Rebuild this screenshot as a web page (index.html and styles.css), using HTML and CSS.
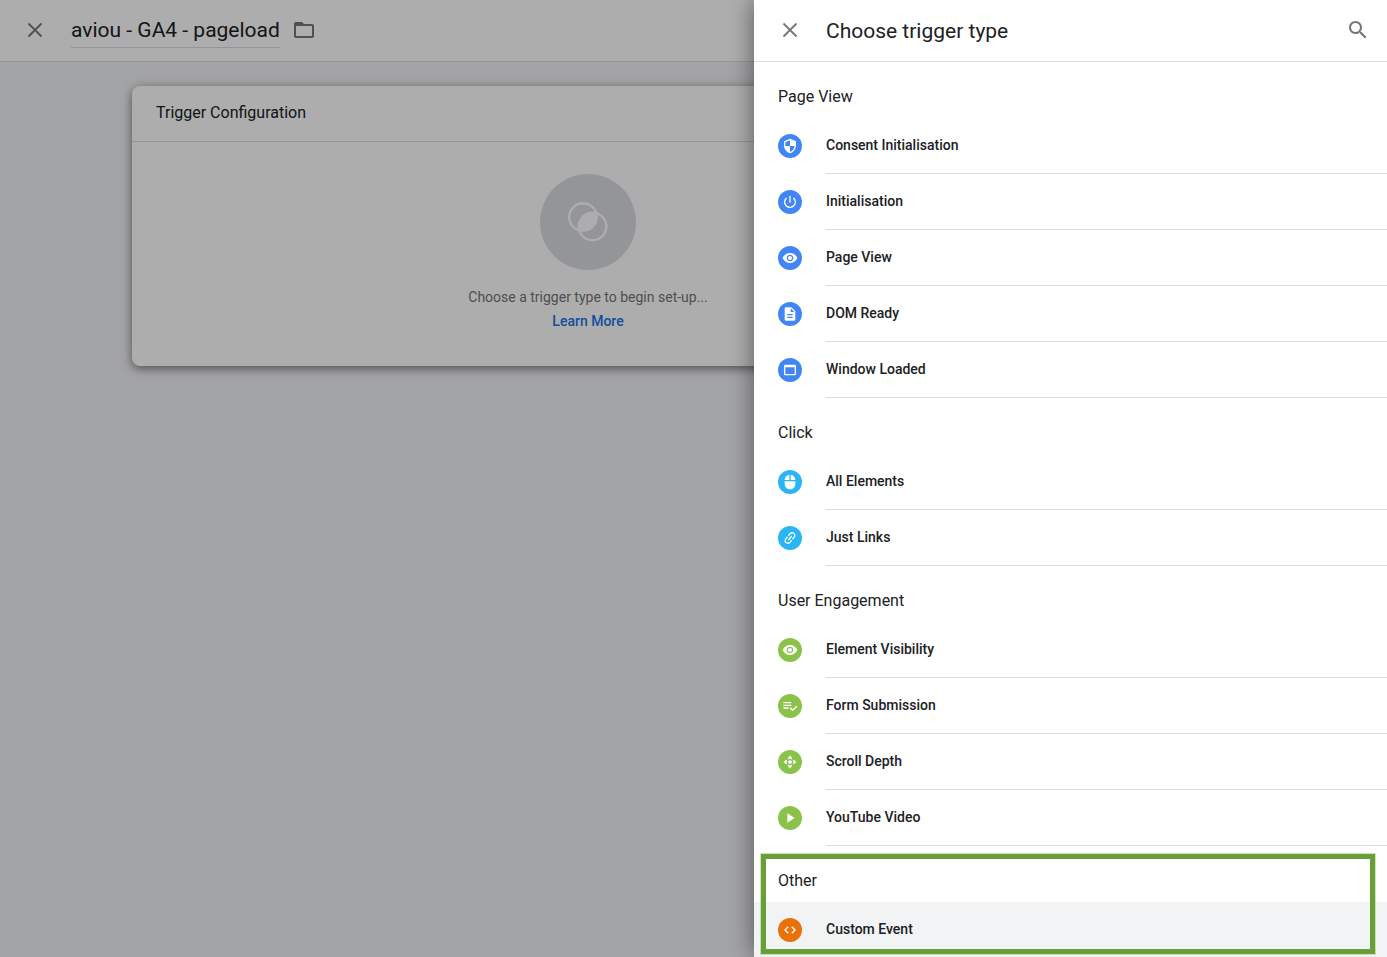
FILE: index.html
```html
<!DOCTYPE html>
<html lang="en">
<head>
  <meta charset="UTF-8">
  <meta name="viewport" content="width=device-width, initial-scale=1.0">
  <title>Choose trigger type</title>
  <link rel="stylesheet" href="styles.css">
</head>
<body>
  <div class="page">
    <header class="header">
      <button class="icon-btn" aria-label="Close trigger">
        <svg viewBox="0 0 24 24"><path d="M5.5 5.5l13 13M18.5 5.5l-13 13" fill="none" stroke="currentColor" stroke-width="1.8"/></svg>
      </button>
      <input class="name" type="text" aria-label="Trigger name" value="aviou - GA4 - pageload">
      <button class="icon-btn folder" aria-label="Move to folder">
        <svg viewBox="0 0 24 24"><path d="M9.17 6l2 2H20v10H4V6h5.17M10 4H4c-1.1 0-1.99.9-1.99 2L2 18c0 1.1.9 2 2 2h16c1.1 0 2-.9 2-2V8c0-1.1-.9-2-2-2h-8l-2-2z"/><path d="M3 5h7l2 3H3z"/></svg>
      </button>
    </header>
    <main class="content">
      <section class="card">
        <h2 class="card-title">Trigger Configuration</h2>
        <div class="card-body">
          <div class="placeholder">
            <svg viewBox="0 0 40 40">
              <circle cx="15" cy="15" r="13.8" fill="none" stroke="#fff" stroke-width="2.4"/>
              <circle cx="24.5" cy="24.5" r="13.8" fill="none" stroke="#fff" stroke-width="2.4"/>
              <path d="M28.2 11.1A13.8 13.8 0 0 1 11.1 28.2A13.8 13.8 0 0 1 28.2 11.1z" fill="#fff"/>
            </svg>
          </div>
          <p class="hint">Choose a trigger type to begin set-up...</p>
          <a class="learn" href="#">Learn More</a>
        </div>
      </section>
    </main>
  </div>

  <div class="overlay"></div>

  <!-- Slide-in panel -->
  <aside class="panel">
    <header class="header panel-header">
      <button class="icon-btn" aria-label="Close panel">
        <svg viewBox="0 0 24 24"><path d="M5.5 5.5l13 13M18.5 5.5l-13 13" fill="none" stroke="currentColor" stroke-width="1.8"/></svg>
      </button>
      <h1 class="panel-title">Choose trigger type</h1>
      <button class="icon-btn" aria-label="Search">
        <svg viewBox="0 0 24 24"><path d="M15.5 14h-.79l-.28-.27C15.41 12.59 16 11.11 16 9.5 16 5.91 13.09 3 9.5 3S3 5.91 3 9.5 5.91 16 9.5 16c1.61 0 3.09-.59 4.23-1.57l.27.28v.79l5 4.99L20.49 19l-4.99-5zm-6 0C7.01 14 5 11.99 5 9.5S7.01 5 9.5 5 14 7.01 14 9.5 11.99 14 9.5 14z"/></svg>
      </button>
    </header>

    <section class="group blue">
      <h2 class="group-title">Page View</h2>
      <button class="item">
        <span class="dot"><svg viewBox="0 0 24 24"><path d="M12 1L3 5v6c0 5.55 3.84 10.74 9 12 5.16-1.26 9-6.45 9-12V5l-9-4zm0 10.99h7c-.53 4.12-3.28 7.79-7 8.94V12H5V6.3l7-3.11v8.8z"/></svg></span>
        <span class="label">Consent Initialisation</span>
      </button>
      <button class="item">
        <span class="dot"><svg viewBox="0 0 24 24"><path d="M13 3h-2v10h2V3zm4.83 2.17l-1.42 1.42C17.99 7.86 19 9.81 19 12c0 3.87-3.13 7-7 7s-7-3.13-7-7c0-2.19 1.01-4.14 2.58-5.42L6.17 5.17C4.23 6.82 3 9.26 3 12c0 4.97 4.03 9 9 9s9-4.03 9-9c0-2.74-1.23-5.18-3.17-6.83z"/></svg></span>
        <span class="label">Initialisation</span>
      </button>
      <button class="item">
        <span class="dot"><svg viewBox="0 0 24 24"><path d="M12 4.5C7 4.5 2.73 7.61 1 12c1.73 4.39 6 7.5 11 7.5s9.27-3.11 11-7.5c-1.73-4.39-6-7.5-11-7.5zM12 17c-2.76 0-5-2.24-5-5s2.24-5 5-5 5 2.24 5 5-2.24 5-5 5zm0-8c-1.66 0-3 1.34-3 3s1.34 3 3 3 3-1.34 3-3-1.34-3-3-3z"/></svg></span>
        <span class="label">Page View</span>
      </button>
      <button class="item">
        <span class="dot"><svg viewBox="0 0 24 24"><path d="M14 2H6c-1.1 0-1.99.9-1.99 2L4 20c0 1.1.89 2 1.99 2H18c1.1 0 2-.9 2-2V8l-6-6zm2 16H8v-2h8v2zm0-4H8v-2h8v2zm-3-5V3.5L18.5 9H13z"/></svg></span>
        <span class="label">DOM Ready</span>
      </button>
      <button class="item">
        <span class="dot"><svg viewBox="0 0 24 24"><path d="M19 4H5c-1.11 0-2 .9-2 2v12c0 1.1.89 2 2 2h14c1.1 0 2-.9 2-2V6c0-1.1-.9-2-2-2zm0 14H5V8h14v10z"/></svg></span>
        <span class="label">Window Loaded</span>
      </button>
    </section>

    <section class="group cyan">
      <h2 class="group-title">Click</h2>
      <button class="item">
        <span class="dot"><svg viewBox="0 0 24 24"><path d="M13 1.07V9h7c0-4.08-3.05-7.44-7-7.93zM4 15c0 4.42 3.58 8 8 8s8-3.58 8-8v-4H4v4zm7-13.93C7.05 1.56 4 4.92 4 9h7V1.07z"/></svg></span>
        <span class="label">All Elements</span>
      </button>
      <button class="item">
        <span class="dot"><svg viewBox="0 0 24 24"><path transform="rotate(-50 12 12)" d="M3.9 12c0-1.71 1.39-3.1 3.1-3.1h4V7H7c-2.76 0-5 2.24-5 5s2.24 5 5 5h4v-1.9H7c-1.71 0-3.1-1.39-3.1-3.1zM8 13h8v-2H8v2zm9-6h-4v1.9h4c1.71 0 3.1 1.39 3.1 3.1s-1.39 3.1-3.1 3.1h-4V17h4c2.76 0 5-2.24 5-5s-2.24-5-5-5z"/></svg></span>
        <span class="label">Just Links</span>
      </button>
    </section>

    <section class="group green">
      <h2 class="group-title">User Engagement</h2>
      <button class="item">
        <span class="dot"><svg viewBox="0 0 24 24"><path d="M12 4.5C7 4.5 2.73 7.61 1 12c1.73 4.39 6 7.5 11 7.5s9.27-3.11 11-7.5c-1.73-4.39-6-7.5-11-7.5zM12 17c-2.76 0-5-2.24-5-5s2.24-5 5-5 5 2.24 5 5-2.24 5-5 5zm0-8c-1.66 0-3 1.34-3 3s1.34 3 3 3 3-1.34 3-3-1.34-3-3-3z"/></svg></span>
        <span class="label">Element Visibility</span>
      </button>
      <button class="item">
        <span class="dot"><svg viewBox="0 0 24 24"><path d="M14 10H2v2h12v-2zm0-4H2v2h12V6zM2 16h8v-2H2v2zm19.5-4.5L23 13l-6.99 7-4.51-4.5L13 14l3.01 3 5.49-5.5z"/></svg></span>
        <span class="label">Form Submission</span>
      </button>
      <button class="item">
        <span class="dot"><svg class="small" viewBox="0 0 24 24"><path d="M5.5 8L1 12l4.5 4 1.600-1.500L6 12l1.100-2.500zM18.500 8l4.500 4-4.500 4-1.600-1.500L18 12l-1.100-2.500zM8 5.500L12 1l4 4.500-1.500 1.600L12 6 9.500 7.100zM8 18.500l4 4.500 4-4.500-1.500-1.600L12 18l-2.500-1.100z"/><circle cx="12" cy="12" r="3.200"/></svg></span>
        <span class="label">Scroll Depth</span>
      </button>
      <button class="item">
        <span class="dot"><svg viewBox="0 0 24 24"><path d="M8 5v14l11-7z"/></svg></span>
        <span class="label">YouTube Video</span>
      </button>
    </section>

    <section class="group orange marked">
      <h2 class="group-title">Other</h2>
      <button class="item active">
        <span class="dot"><svg class="small" viewBox="0 0 24 24"><path d="M9.4 16.6L4.8 12l4.6-4.6L8 6l-6 6 6 6 1.4-1.4zm5.2 0l4.6-4.6-4.6-4.6L16 6l6 6-6 6-1.4-1.4z" stroke="#fff" stroke-width="0.5"/></svg></span>
        <span class="label">Custom Event</span>
      </button>
    </section>
  </aside>
</body>
</html>
```
FILE: styles.css
```css
* {
  box-sizing: border-box;
}

body {
  margin: 0;
  background-color: #f1f2f4;
  color: #202124;
  font-family: Roboto, Arial, sans-serif;
  font-size: 14px;
}

h1, h2, p {
  margin: 0;
  font-weight: 400;
}

button {
  border: none;
  padding: 0;
  background: none;
  color: inherit;
  font-family: inherit;
  cursor: pointer;
}

svg {
  display: block;
  fill: currentColor;
}

.page {
  min-height: 100vh;
}

.header {
  display: flex;
  align-items: center;
  height: 62px;
  padding: 0 23px 2px;
  background-color: #fff;
  border-bottom: 1px solid #dadce0;
}

.icon-btn {
  flex: none;
  width: 24px;
  height: 24px;
  color: #757575;
}

.name {
  width: 209px;
  height: 37px;
  margin-left: 24px;
  padding: 2px 0 0;
  border: none;
  border-bottom: 1px solid #dadce0;
  background: none;
  color: #202124;
  font-family: inherit;
  font-size: 21px;
}

.folder {
  margin-left: 12px;
}

.content {
  padding: 24px 132px;
}

.card {
  max-width: 912px;
  background-color: #fff;
  border-radius: 8px;
  box-shadow: 0 3px 8px rgba(0, 0, 0, 0.4), 0 1px 16px rgba(0, 0, 0, 0.15);
}

.card-title {
  padding: 0 24px 2px;
  border-bottom: 1px solid #dadce0;
  font-size: 16px;
  line-height: 53px;
}

.card-body {
  display: flex;
  flex-direction: column;
  align-items: center;
  padding: 32px 32px 33px;
  line-height: 24px;
}

.placeholder {
  display: flex;
  align-items: center;
  justify-content: center;
  width: 96px;
  height: 96px;
  margin-bottom: 15px;
  border-radius: 50%;
  background-color: #dadce0;
}

.placeholder svg {
  width: 40px;
  height: 40px;
}

.hint {
  color: #757575;
}

.learn {
  color: #1a73e8;
  font-weight: 500;
  text-decoration: none;
}

.overlay {
  position: fixed;
  inset: 0;
  background-color: rgba(0, 0, 0, 0.32);
}

/* Panel styles */
.panel {
  position: fixed;
  top: 0;
  right: 0;
  bottom: 0;
  width: 633px;
  max-width: 100%;
  overflow-y: auto;
  scrollbar-width: none;
  background-color: #fff;
  box-shadow: 0 0 24px rgba(0, 0, 0, 0.5);
}

.panel-header {
  padding: 0 17px 2px 24px;
}

.panel-title {
  flex: 1;
  margin-left: 24px;
  padding-top: 2px;
  font-size: 21px;
}

.group-title {
  padding: 14px 24px 0;
  font-size: 16px;
  line-height: 42px;
}

.item {
  display: flex;
  align-items: center;
  gap: 24px;
  width: 100%;
  height: 56px;
  padding-left: 24px;
  text-align: left;
}

.dot {
  display: flex;
  flex: none;
  align-items: center;
  justify-content: center;
  width: 24px;
  height: 24px;
  border-radius: 50%;
  color: #fff;
}

.dot svg {
  width: 16px;
  height: 16px;
}

.dot .small {
  width: 14px;
  height: 14px;
}

.blue .dot {
  background-color: #4285f4;
}

.cyan .dot {
  background-color: #29b6f6;
}

.green .dot {
  background-color: #8bc34a;
}

.orange .dot {
  background-color: #e8710a;
}

.label {
  flex: 1;
  border-bottom: 1px solid #dadce0;
  font-size: 14px;
  font-weight: 500;
  line-height: 55px;
}

.active {
  background-color: #f1f3f4;
}

.marked {
  position: relative;
}

.marked::after {
  content: "";
  position: absolute;
  inset: 8px 12px 4px 7px;
  border: 5px solid #689f38;
  box-shadow: 0 0 0 1px rgba(139, 195, 74, 0.4);
  pointer-events: none;
}
```
